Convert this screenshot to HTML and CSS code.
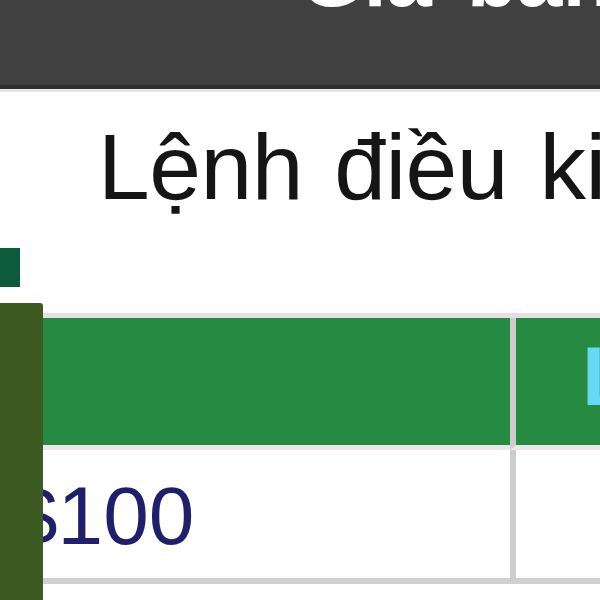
FILE: index.html
```html
<!DOCTYPE html>
<html lang="vi">
<head>
<meta charset="utf-8">
<link rel="stylesheet" href="styles.css">
</head>
<body>
<div class="topbar"><div class="title">Giá bán sản phẩm</div></div>
<div class="strip"></div>
<h1 class="heading">Lệnh điều kiện</h1>
<div class="marker"></div>
<div class="sheet">
  <div class="grid">
    <div class="cell head"></div>
    <div class="cell head sep"><span class="head-text">Loại</span></div>
    <div class="cell row val">$100</div>
    <div class="cell row sep"></div>
  </div>
  <div class="freeze"></div>
</div>
</body>
</html>
```
FILE: styles.css
```css
html, body {
  margin: 0;
  padding: 0;
  width: 600px;
  height: 600px;
  overflow: hidden;
  background: #ffffff;
  font-family: "Liberation Sans", Arial, sans-serif;
}
.topbar {
  height: 85px;
  background: #404040;
  border-bottom: 4px solid #2d2d2d;
  padding-left: 300px;
  overflow: hidden;
}
.title {
  color: #ffffff;
  font-weight: bold;
  font-size: 82px;
  line-height: 1;
  margin-top: -63px;
  white-space: nowrap;
  word-spacing: 12px;
}
.strip {
  height: 3px;
  background: #e4e4e4;
}
.heading {
  margin: 29px 0 0 0;
  padding-left: 98px;
  font-size: 93px;
  line-height: 1;
  font-weight: normal;
  color: #151515;
  white-space: nowrap;
  letter-spacing: -0.5px;
  word-spacing: 6px;
}
.marker {
  width: 20px;
  height: 39px;
  margin-top: 34px;
  background: #0e5a3c;
}
.sheet {
  position: relative;
  margin-top: 16px;
  padding-top: 10px;
  height: 400px;
}
.grid {
  display: grid;
  grid-template-columns: 510px 1fr;
  border-top: 5px solid #e6dfe6;
}
.cell {
  box-sizing: border-box;
  white-space: nowrap;
  overflow: hidden;
}
.head {
  height: 132px;
  background: #268a41;
  border-bottom: 5px solid #ece6ec;
}
.sep {
  border-left: 6px solid #cdcdcd;
}
.head-text {
  display: block;
  padding: 16px 0 0 66px;
  font-size: 84px;
  line-height: 1;
  font-weight: bold;
  color: #66d9f5;
}
.row {
  height: 134px;
  border-bottom: 6px solid #d0d0d0;
}
.val {
  padding: 25px 0 0 12px;
  font-size: 82px;
  line-height: 1;
  color: #1f1f6b;
}
.freeze {
  position: absolute;
  left: 0;
  top: 0;
  width: 43px;
  height: 400px;
  background: #3d5a23;
  border-top-right-radius: 3px;
}
```
